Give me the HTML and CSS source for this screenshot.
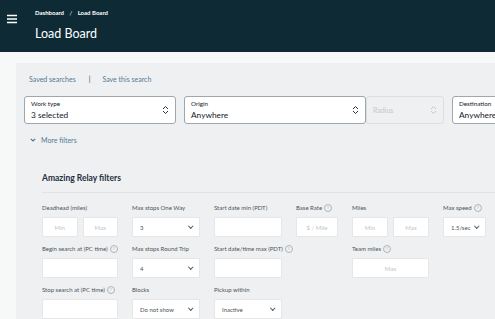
FILE: index.html
```html
<!DOCTYPE html>
<html lang="en">
    <head>
        <meta charset="UTF-8">
        <title>Load Board</title>
        <link rel="stylesheet" href="styles.css">
    </head>
    <body>
        <header class="topbar">
            <div class="menu-btn">
                <svg width="10" height="10" viewBox="0 0 10 10">
                    <path d="M0 1.5h10M0 5h10M0 8.5h10" stroke="#ffffff" stroke-width="1.3"/>
                </svg>
            </div>
            <div class="topbar-text">
                <div class="crumbs">Dashboard <span class="sep">/</span> Load Board</div>
                <div class="page-title">Load Board</div>
            </div>
        </header>

        <main class="page">
            <section class="panel">
                <div class="saved">
                    <a>Saved searches</a>
                    <span class="bar">|</span>
                    <a>Save this search</a>
                </div>

                <div class="search-row">
                    <div class="pick work">
                        <div class="pick-text">
                            <span class="pick-label">Work type</span>
                            <span class="pick-value">3 selected</span>
                        </div>
                        <svg class="updown" width="7" height="10" viewBox="0 0 7 10"><path d="M1 4l2.5-2.5L6 4M1 6l2.5 2.5L6 6" fill="none" stroke="#333" stroke-width="1"/></svg>
                    </div>
                    <div class="pick origin">
                        <div class="pick-text">
                            <span class="pick-label">Origin</span>
                            <span class="pick-value">Anywhere</span>
                        </div>
                        <svg class="updown" width="7" height="10" viewBox="0 0 7 10"><path d="M1 4l2.5-2.5L6 4M1 6l2.5 2.5L6 6" fill="none" stroke="#333" stroke-width="1"/></svg>
                    </div>
                    <div class="pick radius">
                        <div class="pick-text">
                            <span class="pick-value">Radius</span>
                        </div>
                        <svg class="updown" width="7" height="10" viewBox="0 0 7 10"><path d="M1 4l2.5-2.5L6 4M1 6l2.5 2.5L6 6" fill="none" stroke="#c4c8ca" stroke-width="1"/></svg>
                    </div>
                    <div class="pick dest">
                        <div class="pick-text">
                            <span class="pick-label">Destination</span>
                            <span class="pick-value">Anywhere</span>
                        </div>
                    </div>
                </div>

                <div class="more">
                    <svg width="6" height="4" viewBox="0 0 6 4"><path d="M0.8 0.8L3 3l2.2-2.2" fill="none" stroke="#4f7795" stroke-width="1.2"/></svg>
                    <a>More filters</a>
                </div>

                <div class="relay">
                    <h2>Amazing Relay filters</h2>
                    <div class="grid">
                        <div class="field">
                            <label>Deadhead (miles)</label>
                            <div class="pair">
                                <div class="box ph">Min</div>
                                <div class="box ph">Max</div>
                            </div>
                        </div>
                        <div class="field">
                            <label>Max stops One Way</label>
                            <div class="box sel">3<i class="chev"></i></div>
                        </div>
                        <div class="field">
                            <label>Start date min (PDT)</label>
                            <div class="box"></div>
                        </div>
                        <div class="field">
                            <label>Base Rate <span class="q">?</span></label>
                            <div class="box ph">$ / Mile</div>
                        </div>
                        <div class="field">
                            <label>Miles</label>
                            <div class="pair">
                                <div class="box ph">Min</div>
                                <div class="box ph">Max</div>
                            </div>
                        </div>
                        <div class="field">
                            <label>Max speed <span class="q">?</span></label>
                            <div class="box sel">1.5/sec<i class="chev"></i></div>
                        </div>

                        <div class="field">
                            <label>Begin search at (PC time) <span class="q">?</span></label>
                            <div class="box"></div>
                        </div>
                        <div class="field">
                            <label>Max stops Round Trip</label>
                            <div class="box sel">4<i class="chev"></i></div>
                        </div>
                        <div class="field">
                            <label>Start date/time max (PDT) <span class="q">?</span></label>
                            <div class="box"></div>
                        </div>
                        <div class="field"></div>
                        <div class="field">
                            <label>Team miles <span class="q">?</span></label>
                            <div class="box ph">Max</div>
                        </div>
                        <div class="field"></div>

                        <div class="field">
                            <label>Stop search at (PC time) <span class="q">?</span></label>
                            <div class="box"></div>
                        </div>
                        <div class="field">
                            <label>Blocks</label>
                            <div class="box sel">Do not show<i class="chev"></i></div>
                        </div>
                        <div class="field">
                            <label>Pickup within</label>
                            <div class="box sel">Inactive<i class="chev"></i></div>
                        </div>
                    </div>
                </div>
            </section>
        </main>
    </body>
</html>
```

FILE: styles.css
```css
body {
    margin: 0;
    width: 495px;
    height: 319px;
    overflow: hidden;
    background-color: #f7f8f8;
    font-family: 'Lato', 'Noto Sans', sans-serif;
    color: #16191f;
}

.topbar {
    height: 52px;
    background-color: #0e2b35;
    display: flex;
    color: #ffffff;
}

.menu-btn {
    flex: none;
    width: 35px;
    padding: 8px 0 0 7px;
    box-sizing: border-box;
}

.topbar-text {
    flex: none;
    padding-top: 9px;
}

.crumbs {
    font-size: 6px;
    font-weight: 700;
    line-height: 8px;
}

.crumbs .sep {
    margin: 0 4px;
    font-weight: 400;
}

.page-title {
    margin-top: 8px;
    font-size: 12.5px;
    line-height: 18px;
}

.page {
    padding: 11px 0 0 16px;
}

.panel {
    width: 600px;
    height: 300px;
    background-color: #eff0f1;
    padding: 11px 8px 0 8px;
}

a {
    color: #517a96;
}

.saved {
    font-size: 7px;
    line-height: 10px;
    padding-left: 5px;
    display: flex;
}

.saved .bar {
    color: #333;
    margin: 0 12px 0 13px;
}

.search-row {
    margin-top: 12px;
    display: flex;
    height: 28px;
}

.pick {
    background-color: #ffffff;
    border: 1px solid #9da7ac;
    border-radius: 3px;
    box-sizing: border-box;
    display: flex;
    align-items: center;
    padding: 0 6px;
}

.pick-text {
    flex: 1;
    display: flex;
    flex-direction: column;
    gap: 2px;
}

.pick-label {
    font-size: 6.3px;
    line-height: 8px;
}

.pick-value {
    font-size: 8.3px;
    line-height: 10px;
}

.work {
    width: 152px;
    margin-right: 8px;
}

.origin {
    width: 182px;
}

.radius {
    width: 78px;
    background-color: #eff0f1;
    border-color: #dcdfe0;
    margin-right: 8px;
}

.radius .pick-value {
    color: #c4c8ca;
    font-size: 7px;
}

.dest {
    width: 100px;
}

.more {
    margin-top: 11px;
    display: flex;
    align-items: center;
    font-size: 7px;
    line-height: 10px;
    padding-left: 6px;
}

.more svg {
    margin-right: 5px;
}

.relay {
    margin-top: 27px;
    padding-left: 18px;
}

h2 {
    margin: 0;
    font-size: 8.5px;
    font-weight: 700;
    line-height: 12px;
    color: #232f3e;
    padding-bottom: 8px;
    border-bottom: 1px solid #e1e3e4;
}

.grid {
    margin-top: 10px;
    display: grid;
    grid-template-columns: 76px 68px 68px 42px 77px 43px;
    column-gap: 14px;
    row-gap: 7px;
}

.field label {
    display: flex;
    align-items: center;
    gap: 2px;
    font-size: 6px;
    line-height: 10px;
    color: #4d5459;
    white-space: nowrap;
    margin-bottom: 4px;
}

.q {
    flex: none;
    display: inline-flex;
    justify-content: center;
    align-items: center;
    width: 6px;
    height: 6px;
    border: 0.6px solid #b0b5b9;
    border-radius: 50%;
    font-size: 4.5px;
    color: #b0b5b9;
}

.pair {
    display: flex;
    gap: 5px;
}

.pair .box {
    flex: 1;
}

.box {
    height: 20px;
    box-sizing: border-box;
    background-color: #ffffff;
    border: 1px solid #e4e6e7;
    border-radius: 1px;
    display: flex;
    align-items: center;
    font-size: 6px;
    color: #4d5459;
}

.box.ph {
    justify-content: center;
    color: #c2c6c9;
}

.box.sel {
    padding: 0 7px;
    justify-content: space-between;
}

.chev {
    width: 2.5px;
    height: 2.5px;
    border-right: 1px solid #555;
    border-bottom: 1px solid #555;
    transform: rotate(45deg);
    margin-top: -2px;
}
```
